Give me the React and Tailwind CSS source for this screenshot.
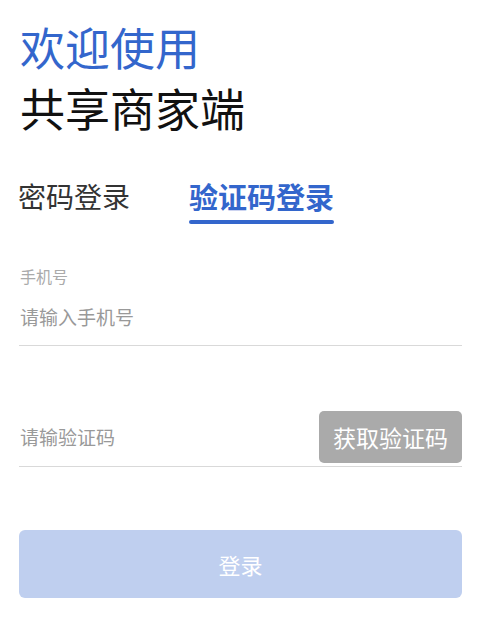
import { useState } from 'react';

export default function App() {
  const [tab, setTab] = useState('code');
  const [phone, setPhone] = useState('');
  const [code, setCode] = useState('');

  const font = { fontFamily: '"Noto Sans CJK SC", "Noto Sans", sans-serif' };

  return (
    <div className="min-h-[636px] w-full bg-white pl-[19px] pr-[25px] pt-[17px]" style={font}>
      {/* 标题 */}
      <div className="pl-[1px]">
        <h1 className="text-[45px] leading-[60px] font-normal text-[#3366cc]">欢迎使用</h1>
        <h2 className="text-[45px] leading-[61px] font-normal text-[#111]">共享商家端</h2>
      </div>

      {/* 切换 */}
      <div className="-ml-[1px] mt-[38px] flex items-start gap-[59px]">
        <button onClick={() => setTab('pwd')} className="flex flex-col items-start">
          <span className={`text-[28px] leading-[40px] ${tab === 'pwd' ? 'font-bold text-[#3366cc]' : 'text-[#333]'}`}>密码登录</span>
          <span className={`mt-[4px] h-[4px] w-full rounded-full ${tab === 'pwd' ? 'bg-[#3366cc]' : 'bg-transparent'}`} />
        </button>
        <button onClick={() => setTab('code')} className="flex flex-col items-start">
          <span className={`text-[29px] leading-[40px] ${tab === 'code' ? 'font-bold text-[#3366cc]' : 'text-[#333]'}`}>验证码登录</span>
          <span className={`mt-[4px] h-[4px] w-full rounded-full ${tab === 'code' ? 'bg-[#3366cc]' : 'bg-transparent'}`} />
        </button>
      </div>

      {/* 手机号 */}
      <div className="mt-[42px]">
        <div className="pl-[1px] text-[16px] leading-[20px] text-[#aaa]">手机号</div>
        <div className="flex h-[60px] items-center border-b border-[#d9d9d9] pt-[3px]">
          <input
            value={phone}
            onChange={e => setPhone(e.target.value)}
            placeholder="请输入手机号"
            className="w-full bg-transparent pl-[1px] text-[19px] text-[#333] outline-none placeholder:text-[#999]"
          />
        </div>
      </div>

      {/* 验证码 */}
      <div className="mt-[65px] flex items-center border-b border-[#d9d9d9] pb-[3px]">
        <input
          value={code}
          onChange={e => setCode(e.target.value)}
          placeholder="请输验证码"
          className="min-w-0 flex-1 bg-transparent pl-[1px] text-[19px] text-[#333] outline-none placeholder:text-[#999]"
        />
        <button className="h-[52px] w-[143px] rounded-[5px] bg-[#aaaaaa] text-[23px] text-white">获取验证码</button>
      </div>

      {/* 登录 */}
      <button className="mt-[63px] h-[68px] w-full rounded-[6px] bg-[#bfcfef] text-[22px] text-white">登录</button>
    </div>
  );
}
